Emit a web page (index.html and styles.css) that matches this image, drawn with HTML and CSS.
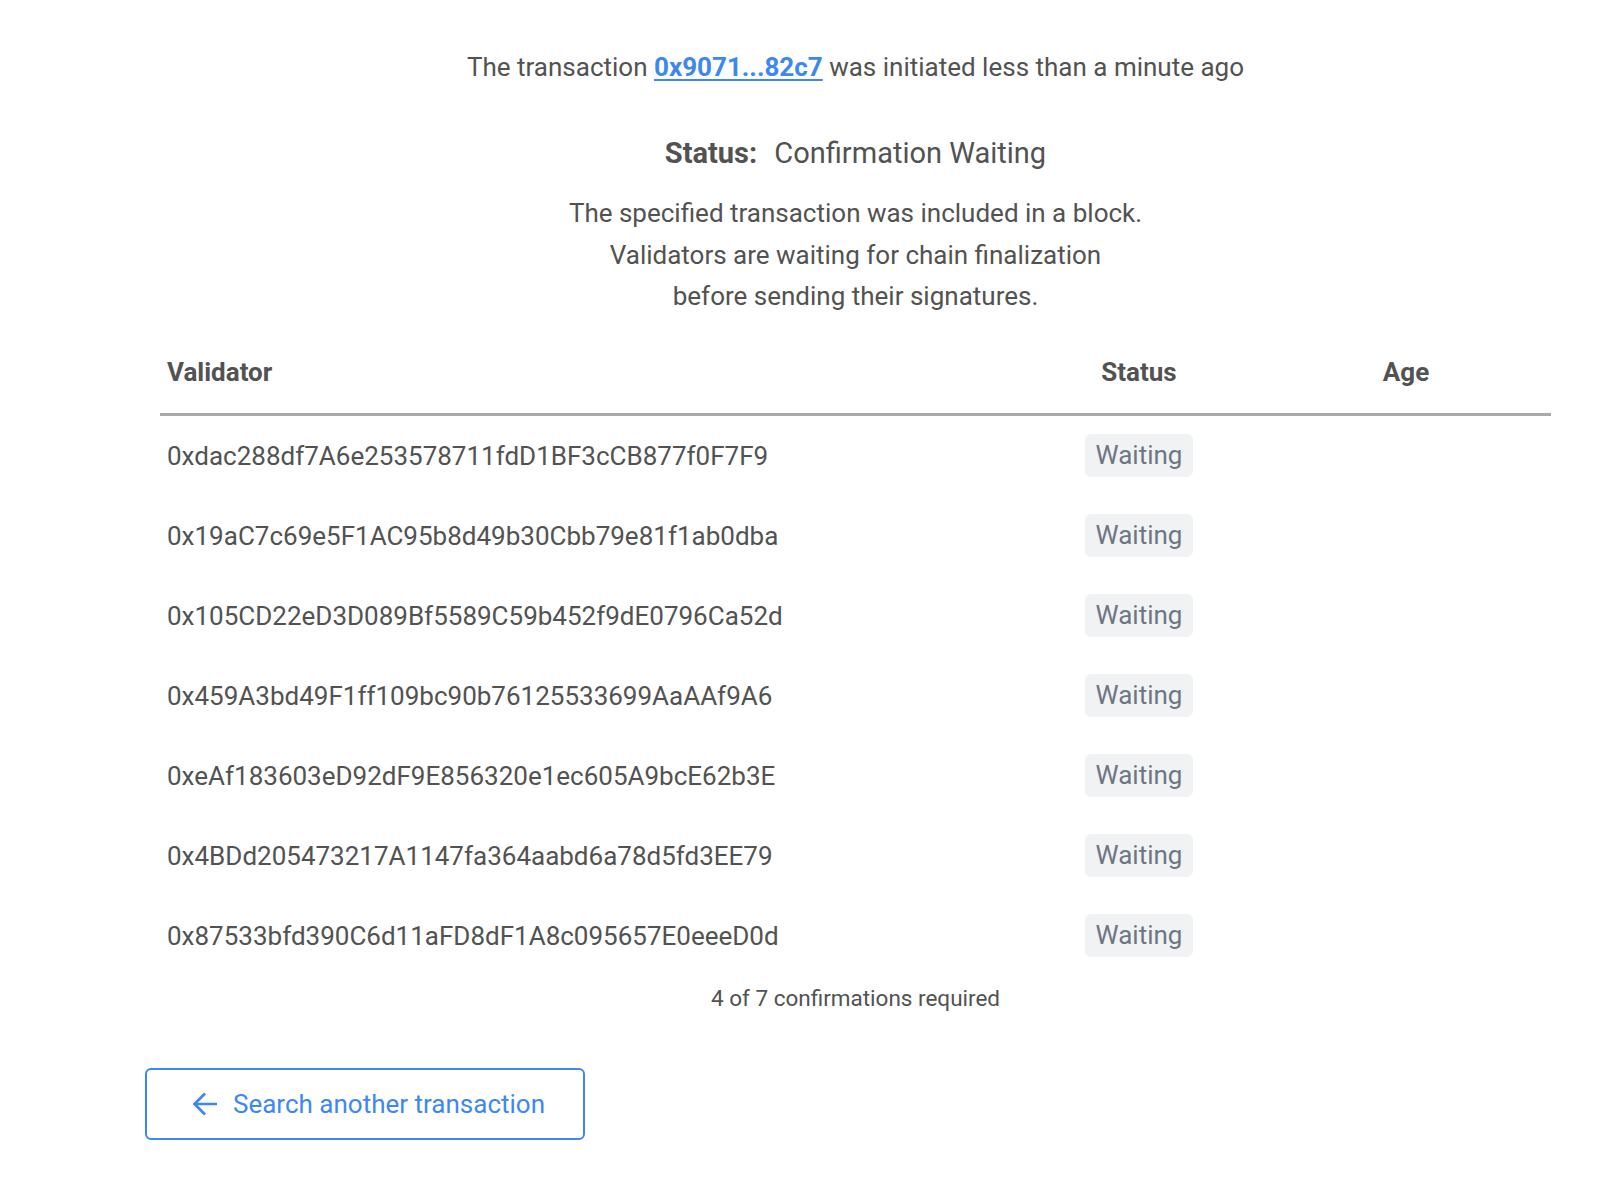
FILE: index.html
```html
<!DOCTYPE html>
<html>
<head>
<meta charset="utf-8">
<link rel="stylesheet" href="styles.css">
</head>
<body>
<main class="page">
  <p class="intro">The transaction <a class="tx-link" href="#">0x9071...82c7</a> was initiated less than a minute ago</p>
  <h2 class="status-line"><span class="status-label">Status:</span> Confirmation Waiting</h2>
  <p class="desc">The specified transaction was included in a block.<br>Validators are waiting for chain finalization<br>before sending their signatures.</p>

  <div class="table">
    <div class="row head">
      <div class="cell c-val">Validator</div>
      <div class="cell c-status">Status</div>
      <div class="cell c-age">Age</div>
    </div>
    <div class="row">
      <div class="cell c-val">0xdac288df7A6e253578711fdD1BF3cCB877f0F7F9</div>
      <div class="cell c-status"><span class="badge">Waiting</span></div>
      <div class="cell c-age"></div>
    </div>
    <div class="row">
      <div class="cell c-val">0x19aC7c69e5F1AC95b8d49b30Cbb79e81f1ab0dba</div>
      <div class="cell c-status"><span class="badge">Waiting</span></div>
      <div class="cell c-age"></div>
    </div>
    <div class="row">
      <div class="cell c-val">0x105CD22eD3D089Bf5589C59b452f9dE0796Ca52d</div>
      <div class="cell c-status"><span class="badge">Waiting</span></div>
      <div class="cell c-age"></div>
    </div>
    <div class="row">
      <div class="cell c-val">0x459A3bd49F1ff109bc90b76125533699AaAAf9A6</div>
      <div class="cell c-status"><span class="badge">Waiting</span></div>
      <div class="cell c-age"></div>
    </div>
    <div class="row">
      <div class="cell c-val">0xeAf183603eD92dF9E856320e1ec605A9bcE62b3E</div>
      <div class="cell c-status"><span class="badge">Waiting</span></div>
      <div class="cell c-age"></div>
    </div>
    <div class="row">
      <div class="cell c-val">0x4BDd205473217A1147fa364aabd6a78d5fd3EE79</div>
      <div class="cell c-status"><span class="badge">Waiting</span></div>
      <div class="cell c-age"></div>
    </div>
    <div class="row">
      <div class="cell c-val">0x87533bfd390C6d11aFD8dF1A8c095657E0eeeD0d</div>
      <div class="cell c-status"><span class="badge">Waiting</span></div>
      <div class="cell c-age"></div>
    </div>
  </div>

  <p class="confirmations">4 of 7 confirmations required</p>

  <div class="actions">
    <button class="back-btn" type="button">
      <svg class="back-icon" width="26" height="26" viewBox="0 0 26 26" aria-hidden="true">
        <path d="M25 13H2.5M13 2.5L2.5 13L13 23.5" fill="none" stroke="currentColor" stroke-width="2.7" stroke-linecap="butt" stroke-linejoin="miter"/>
      </svg>
      <span>Search another transaction</span>
    </button>
  </div>
</main>
</body>
</html>
```

FILE: styles.css
```css
html, body {
  margin: 0;
  padding: 0;
  background: #ffffff;
}

body {
  font-family: Roboto, "Liberation Sans", sans-serif;
  color: #525252;
}

.page {
  width: 1421px;
  margin-left: 145px;
  padding-top: 50px;
  display: flex;
  flex-direction: column;
}

.intro {
  margin: 0;
  text-align: center;
  font-size: 26px;
  line-height: 34px;
}

.tx-link {
  color: #3d87f5;
  font-weight: 700;
  text-decoration: underline;
  text-decoration-thickness: 2px;
  text-underline-offset: 3px;
}

.status-line {
  margin: 49px 0 0;
  text-align: center;
  font-size: 29px;
  line-height: 40px;
  font-weight: 400;
}

.status-label {
  font-weight: 700;
  margin-right: 10px;
}

.desc {
  margin: 20px 0 0;
  text-align: center;
  font-size: 26px;
  line-height: 41.5px;
}

.table {
  margin: 14px 15px 0;
  display: flex;
  flex-direction: column;
}

.row {
  display: grid;
  grid-template-columns: 857px 244px 1fr;
  align-items: center;
  height: 80px;
}

.row.head {
  height: 84px;
  border-bottom: 3px solid #a9a9a9;
  box-sizing: border-box;
  padding-bottom: 1px;
}

.cell {
  font-size: 26px;
}

.head .cell {
  font-weight: 700;
}

.c-val {
  padding-left: 7px;
}

.c-status,
.c-age {
  text-align: center;
}

.badge {
  display: inline-block;
  background: #f0f2f4;
  color: #6e7684;
  border-radius: 6px;
  padding: 0 11px;
  height: 43px;
  line-height: 43px;
}

.confirmations {
  margin: 7px 0 0;
  text-align: center;
  font-size: 22.5px;
  line-height: 30px;
}

.actions {
  margin-top: 55px;
  display: flex;
}

.back-btn {
  display: flex;
  align-items: center;
  gap: 15px;
  width: 440px;
  height: 72px;
  box-sizing: border-box;
  padding: 0 0 0 45px;
  border: 2px solid #3d87f5;
  border-radius: 6px;
  background: #ffffff;
  color: #3d87f5;
  font-family: Roboto, "Liberation Sans", sans-serif;
  font-size: 26px;
  cursor: pointer;
}

.back-icon {
  flex: none;
}
```
